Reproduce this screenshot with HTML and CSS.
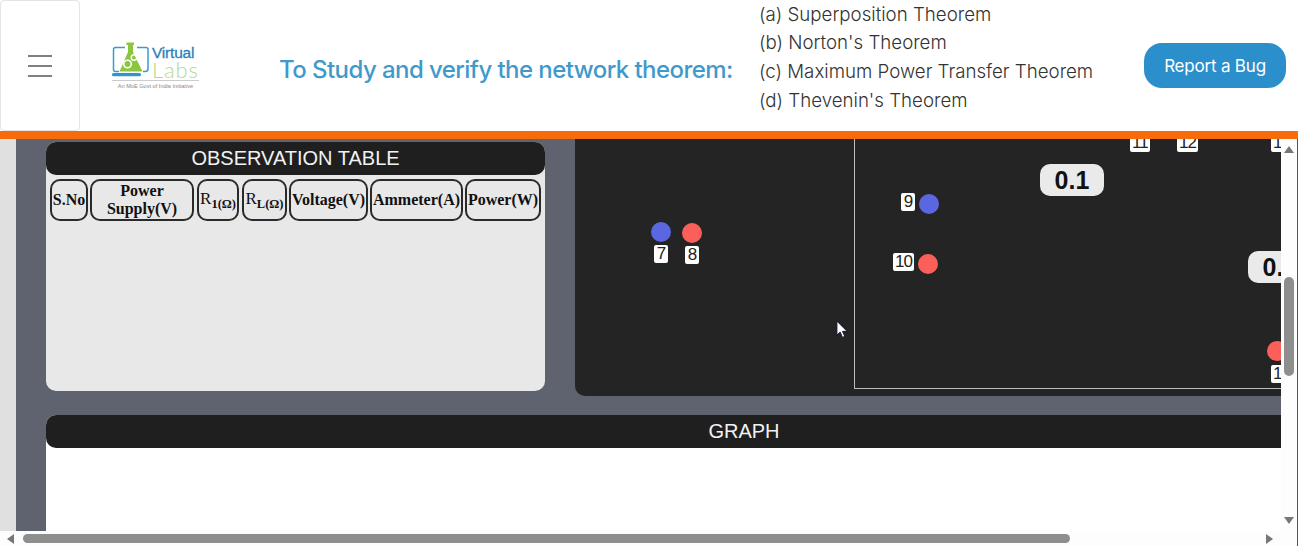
FILE: index.html
```html
<!DOCTYPE html>
<html lang="en">
<head>
    <meta charset="UTF-8">
    <meta name="viewport" content="width=device-width, initial-scale=1.0">
    <title>Network Theorem</title>
    <link rel="stylesheet" href="styles.css">
</head>
<body>

<header class="topbar">
    <button class="menu-btn" type="button" aria-label="Menu">
        <span></span><span></span><span></span>
    </button>

    <div class="logo">
        <svg class="logo-mark" width="40" height="35" viewBox="0 0 40 35">
            <path d="M7 29.500H3.500Q1.500 29.500 1.500 27.500V7.500Q1.500 5.500 3.500 5.500H13M25 5.500H34Q36 5.500 36 7.500V27Q36 29.500 33 29.500H31" fill="none" stroke="#3a9bd0" stroke-width="1.500"/>
            <path d="M14.500 0.500H22V3H21V10L30.500 29.500H7.500L16 10V3H14.500Z" fill="#8cc63f"/>
            <circle cx="15.500" cy="22" r="3.800" fill="none" stroke="#fff" stroke-width="1.600"/>
            <circle cx="22" cy="15.500" r="2.800" fill="none" stroke="#fff" stroke-width="1.400"/>
            <rect x="0" y="31" width="29" height="3.200" rx="1.500" fill="#2e95cf"/>
        </svg>
        <div class="logo-words">
            <span class="logo-virtual">Virtual</span>
            <span class="logo-labs">Labs</span>
        </div>
        <div class="logo-tag">An MoE Govt of India Initiative</div>
    </div>

    <h1 class="title">To Study and verify the network theorem:</h1>

    <ul class="theorems">
        <li>(a) Superposition Theorem</li>
        <li>(b) Norton's Theorem</li>
        <li>(c) Maximum Power Transfer Theorem</li>
        <li>(d) Thevenin's Theorem</li>
    </ul>

    <a class="bug-btn" href="#">Report a Bug</a>
</header>

<div class="stage">
    <main class="content">
        <div class="top-row">
            <section class="obs-card">
                <h2 class="bar-title">OBSERVATION TABLE</h2>
                <div class="obs-head">
                    <div class="cell c-sno">S.No</div>
                    <div class="cell c-supply">Power<br>Supply(V)</div>
                    <div class="cell c-r1"><span>R<sub>1(Ω)</sub></span></div>
                    <div class="cell c-rl"><span>R<sub>L(Ω)</sub></span></div>
                    <div class="cell c-volt">Voltage(V)</div>
                    <div class="cell c-amm">Ammeter(A)</div>
                    <div class="cell c-pow">Power(W)</div>
                </div>
            </section>

            <section class="circuit">
                <div class="board"></div>

                <span class="dot blue" style="left:76px;top:100px"></span>
                <span class="dot red" style="left:107px;top:101px"></span>
                <span class="tag" style="left:79px;top:123px">7</span>
                <span class="tag" style="left:110px;top:124px">8</span>

                <span class="dot blue" style="left:344px;top:72px"></span>
                <span class="tag" style="left:326px;top:71px">9</span>
                <span class="dot red" style="left:343px;top:132px"></span>
                <span class="tag" style="left:318px;top:131px">10</span>

                <span class="tag" style="left:555px;top:12px">11</span>
                <span class="tag" style="left:602px;top:12px">12</span>
                <span class="tag" style="left:696px;top:12px">13</span>

                <span class="value" style="left:465px;top:42px">0.1</span>
                <span class="value" style="left:673px;top:129px">0.1</span>

                <span class="dot red" style="left:692px;top:219px"></span>
                <span class="tag" style="left:696px;top:243px">14</span>
            </section>

            <svg class="cursor" width="13" height="19" viewBox="0 0 14 20">
                <path d="M1 1V16L4.500 12.800L7 18.500L9.500 17.400L7 12H12Z" fill="#fff" stroke="#101030" stroke-width="1"/>
            </svg>
        </div>

        <section class="graph">
            <h2 class="bar-title">GRAPH</h2>
        </section>
    </main>

    <div class="scroll-y">
        <span class="arrow up"></span>
        <span class="thumb-y"></span>
        <span class="arrow down"></span>
    </div>

    <div class="scroll-x">
        <span class="arrow left"></span>
        <span class="thumb-x"></span>
        <span class="arrow right"></span>
    </div>
    <div class="scroll-corner"></div>
</div>

</body>
</html>
```

FILE: styles.css
```css
html, body {
    margin: 0;
    height: 100%;
    overflow: hidden;
}

body {
    display: flex;
    flex-direction: column;
    background: #fff;
    font-family: "Liberation Sans", Arial, sans-serif;
}

/* header */
.topbar {
    display: flex;
    align-items: center;
    height: 131px;
    flex: none;
    box-sizing: content-box;
    border-bottom: 8px solid #f76b0a;
}

.menu-btn {
    display: flex;
    flex-direction: column;
    align-items: center;
    justify-content: center;
    gap: 8px;
    width: 80px;
    height: 131px;
    flex: none;
    padding: 0;
    background: #fff;
    border: 1px solid #e4e4e4;
    border-radius: 4px;
}

.menu-btn span {
    display: block;
    width: 24px;
    height: 2px;
    background: #808080;
}

.logo {
    display: grid;
    grid-template-columns: 40px auto;
    width: 86px;
    flex: none;
    margin: 0 0 0 32px;
}

.logo-words {
    display: flex;
    flex-direction: column;
    margin-top: 2px;
}

.logo-virtual {
    color: #2a7fb8;
    font-family: "Liberation Sans", sans-serif;
    font-size: 15.500px;
    line-height: 17px;
    letter-spacing: -0.2px;
    -webkit-text-stroke: 0.3px #2a7fb8;
}

.logo-labs {
    color: #b5d88e;
    font-family: Lato, sans-serif;
    font-size: 22px;
    font-weight: 300;
    line-height: 18px;
    letter-spacing: 0.9px;
}

.logo-tag {
    grid-column: 1 / 3;
    margin-top: 1px;
    padding-top: 1px;
    border-top: 1px solid #ccc;
    color: #888;
    font-size: 5.600px;
    line-height: 8px;
    text-align: center;
    white-space: nowrap;
}

.title {
    width: 480px;
    flex: none;
    margin: 8px 0 0 81px;
    color: #3f9acb;
    font-family: Inter, sans-serif;
    font-size: 24px;
    font-weight: 500;
    letter-spacing: -0.56px;
    white-space: nowrap;
}

.theorems {
    width: 385px;
    flex: none;
    margin: -15px 0 0;
    padding: 0;
    list-style: none;
    color: #333;
    font-family: Inter, sans-serif;
    font-size: 18.700px;
    font-weight: 300;
    line-height: 28.700px;
    white-space: nowrap;
}

.bug-btn {
    display: flex;
    align-items: center;
    justify-content: center;
    width: 142px;
    height: 45px;
    flex: none;
    border-radius: 18px;
    background: #2a8fcb;
    color: #fff;
    font-family: Inter, sans-serif;
    font-size: 17px;
    font-weight: 400;
    letter-spacing: -0.2px;
    text-decoration: none;
}

/* page area under the header */
.stage {
    display: grid;
    grid-template-columns: 1fr 16px 1px;
    grid-template-rows: 1fr 15px;
    flex: 1;
    min-height: 0;
}

.content {
    overflow: hidden;
    padding: 3px 0 0 30px;
    background: #5f6370;
    border-left: 16px solid #e0e0e0;
}

.top-row {
    position: relative;
    display: flex;
    gap: 30px;
    width: 1300px;
}

.obs-card {
    width: 499px;
    height: 249px;
    flex: none;
    border-radius: 10px;
    background: #e8e8e8;
}

.bar-title {
    height: 33px;
    margin: 0;
    border-radius: 10px;
    background: #1f1f1f;
    color: #f2f2f2;
    font-size: 20px;
    font-weight: 400;
    line-height: 33px;
    text-align: center;
}

.obs-head {
    display: flex;
    gap: 2px;
    padding: 4px 4px 0;
}

.cell {
    display: flex;
    align-items: center;
    justify-content: center;
    box-sizing: border-box;
    height: 42px;
    flex: none;
    border: 2px solid #2a2a2a;
    border-radius: 10px;
    color: #111;
    font-family: "Liberation Serif", "Times New Roman", serif;
    font-size: 16px;
    font-weight: 700;
    line-height: 18px;
    text-align: center;
    white-space: nowrap;
}

.cell span {
    margin-top: -3px;
    font-weight: 400;
    font-size: 17px;
}

.cell sub {
    font-size: 12.500px;
    font-weight: 700;
    line-height: 0;
}

.c-sno { width: 38px; }
.c-supply { width: 104px; }
.c-r1 { width: 42px; margin-left: 1px; }
.c-rl { width: 45px; margin-left: 1px; }
.c-volt { width: 79px; }
.c-amm { width: 93px; }
.c-pow { width: 76px; }

.circuit {
    position: relative;
    width: 760px;
    height: 274px;
    flex: none;
    margin-top: -20px;
    border-radius: 10px;
    background: #242424;
}

.board {
    position: absolute;
    left: 279px;
    top: -2px;
    width: 600px;
    height: 269px;
    border: 1px solid #bdbdbd;
    box-sizing: border-box;
}

.dot {
    position: absolute;
    width: 20px;
    height: 20px;
    border-radius: 50%;
}

.dot.blue { background: #5b67e0; }
.dot.red { background: #fb5f5a; }

.tag {
    position: absolute;
    padding: 0 2px;
    min-width: 10px;
    height: 18px;
    border-radius: 2px;
    background: #fff;
    color: #222;
    font-size: 17px;
    letter-spacing: -1px;
    line-height: 18px;
    text-align: center;
}

.value {
    position: absolute;
    width: 64px;
    height: 32px;
    border-radius: 10px;
    background: #eaeaea;
    color: #111;
    font-size: 25px;
    font-weight: 700;
    line-height: 32px;
    text-align: center;
}

.cursor {
    position: absolute;
    left: 790px;
    top: 178px;
}

.graph {
    width: 1396px;
    height: 300px;
    margin-top: 19px;
    border-radius: 10px 0 0 0;
    background: #fff;
}

/* scrollbars */
.scroll-y {
    display: flex;
    flex-direction: column;
    align-items: center;
    padding: 7px 0 7px;
    background: #fdfdfd;
}

.thumb-y {
    width: 10px;
    height: 99px;
    margin-top: 124px;
    border-radius: 5px;
    background: #8e8e8e;
}

.scroll-x {
    grid-column: 1 / 3;
    display: flex;
    align-items: center;
    padding: 0 24px 0 7px;
    background: #fdfdfd;
}

.thumb-x {
    width: 1047px;
    height: 9px;
    margin-left: 9px;
    border-radius: 5px;
    background: #8e8e8e;
}

.scroll-corner {
    grid-row: 1 / 3;
    grid-column: 3;
    background: #555;
}

.arrow {
    width: 0;
    height: 0;
    flex: none;
    border-style: solid;
    border-color: transparent;
}

.arrow.up { border-width: 0 5px 7px; border-bottom-color: #777; }
.arrow.down { border-width: 7px 5px 0; border-top-color: #777; margin-top: auto; }
.arrow.left { border-width: 5px 7px 5px 0; border-right-color: #777; }
.arrow.right { border-width: 5px 0 5px 7px; border-left-color: #777; margin-left: auto; }
```
